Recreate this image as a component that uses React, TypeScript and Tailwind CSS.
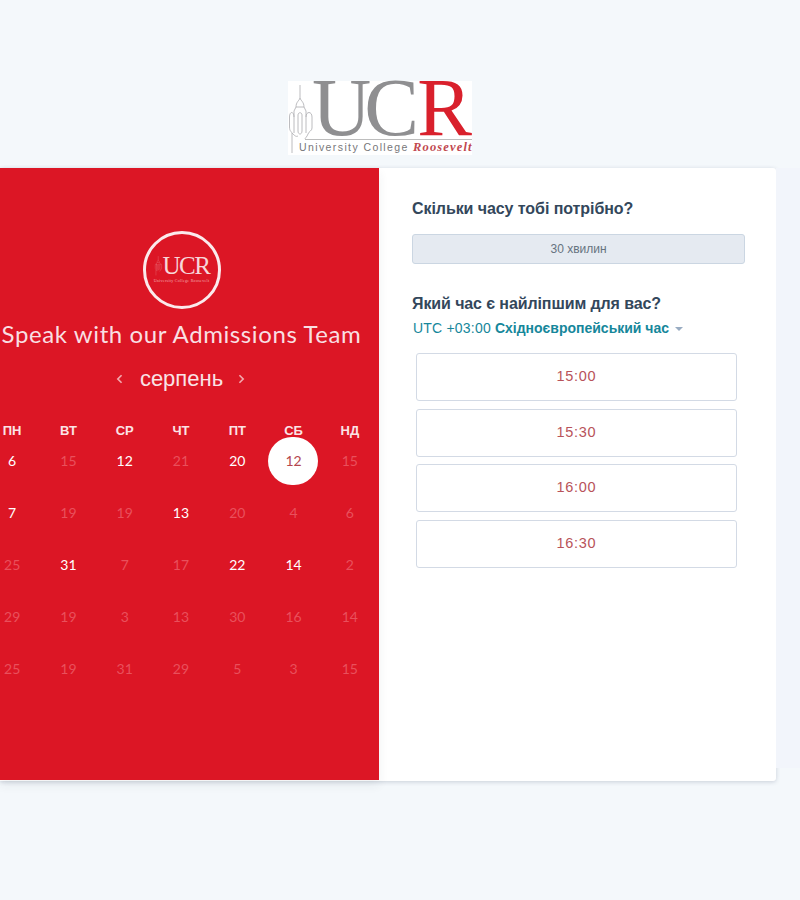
const days = ['ПН', 'ВТ', 'СР', 'ЧТ', 'ПТ', 'СБ', 'НД'];

// n = number, on = bright (available), sel = selected circle
const weeks = [
  [{ n: 6, on: true }, { n: 15 }, { n: 12, on: true }, { n: 21 }, { n: 20, on: true }, { n: 12, sel: true }, { n: 15 }],
  [{ n: 7, on: true }, { n: 19 }, { n: 19 }, { n: 13, on: true }, { n: 20 }, { n: 4 }, { n: 6 }],
  [{ n: 25 }, { n: 31, on: true }, { n: 7 }, { n: 17 }, { n: 22, on: true }, { n: 14, on: true }, { n: 2 }],
  [{ n: 29 }, { n: 19 }, { n: 3 }, { n: 13 }, { n: 30 }, { n: 16 }, { n: 14 }],
  [{ n: 25 }, { n: 19 }, { n: 31 }, { n: 29 }, { n: 5 }, { n: 3 }, { n: 15 }],
];

const times = ['15:00', '15:30', '16:00', '16:30'];

function Tower({ className, color }: { className: string; color: string }) {
  return (
    <svg viewBox="0 0 26 74" className={className} fill="none" stroke={color} strokeWidth="0.9">
      <path d="M12 4V17M8 26C8 21 11 20 12 17C13 20 16 21 16 26M6 30L8 26H16L18 30" />
      <path d="M6 30V52M18 30V52M10 50V34C10 31 14 31 14 34V50C14 54 10 54 10 50Z" />
      <path d="M6 36C6 30 1.5 30 1.5 36V46C1.5 50 3 50 4 52M18 36C18 30 24 30 24 36V47C24 50 21 50 20 53" />
      <path d="M4 52V72M4 52C7 55 8 56 10 55M20 53C19 56 17 57 17 58" />
    </svg>
  );
}

function Logo() {
  return (
    <div className="relative w-[184px] h-[74px] bg-white font-['Liberation_Serif',serif]">
      <Tower className="absolute left-0 top-0 w-[26px] h-[74px]" color="#b4b4b8" />
      <div className="absolute left-[24px] top-[-14px] text-[82px] leading-[82px] tracking-[-7px] text-[#8f8f91]">UC</div>
      <div className="absolute right-0 top-[-14px] text-[82px] leading-[82px] text-[#d9202c]">R</div>
      <div className="absolute left-[17px] right-0 top-[58px] border-t border-[#bdbdbd]" />
      <div className="absolute left-[11px] top-[59px] text-[10.5px] leading-[15px] tracking-[1.4px] text-[#77777a] whitespace-nowrap font-['Liberation_Sans',sans-serif]">
        University College
      </div>
      <div className="absolute left-[125px] top-[59px] text-[12.5px] leading-[15px] tracking-[1.15px] italic font-bold text-[#c1484f] whitespace-nowrap">
        Roosevelt
      </div>
    </div>
  );
}

function SmallLogo() {
  return (
    <div className="w-[78px] h-[78px] rounded-full border-[3px] border-[#fbeaec] flex flex-col items-center justify-center font-['Liberation_Serif',serif] text-[#f7d6d9]">
      <div className="flex items-end h-[23px] mb-[1px]">
        <Tower className="w-[9px] h-[21px] mb-[1px]" color="#f0a0a6" />
        <span className="text-[25px] leading-[23px] tracking-[-1.5px]">UCR</span>
      </div>
      <div className="text-[4px] leading-[5px] tracking-[0.3px] text-[#f3aeb3] whitespace-nowrap mb-[3px]">University College Roosevelt</div>
    </div>
  );
}

export default function App() {
  return (
    <div className="w-[800px] h-[900px] bg-[#f4f8fb] overflow-hidden font-['Liberation_Sans',sans-serif]">
      <div className="flex justify-center pt-[81px] mr-[40px]">
        <Logo />
      </div>

      <div className="flex mt-[13px] items-start">
        <div className="flex w-[776px] h-[613px] rounded-r-[3px] shadow-[0_1px_4px_rgba(50,70,100,0.22)] bg-white">
          <div className="w-[379px] h-[612px] bg-[#dc1625] shadow-[0_5px_10px_rgba(40,50,70,0.07)] overflow-hidden">
            {/* column is wider than the panel, cut off on the left */}
            <div className="ml-[-16px] w-[395px] flex flex-col items-center pt-[63px]">
              <SmallLogo />
              <h1 className="mt-[7px] h-[36px] text-[24px] leading-[36px] text-[#f9dfe2] font-['Lato',sans-serif] font-normal whitespace-nowrap tracking-[0.6px]">
                Speak with our Admissions Team
              </h1>
              <div className="flex items-center mt-[9px] mr-[2px] h-[36px] text-[#f9e3e5]">
                <svg viewBox="0 0 8 12" className="w-[7px] h-[10px] mr-[17px]" fill="none" stroke="#f3a9ae" strokeWidth="2">
                  <path d="M6.5 1.5 2 6l4.5 4.5" />
                </svg>
                <span className="text-[22px] leading-[36px]">серпень</span>
                <svg viewBox="0 0 8 12" className="w-[7px] h-[10px] ml-[15px]" fill="none" stroke="#f3a9ae" strokeWidth="2">
                  <path d="M1.5 1.5 6 6l-4.5 4.5" />
                </svg>
              </div>

              <div className="w-[394px] mt-[24px] mr-[1px]">
                <div className="grid grid-cols-7 h-[20px]">
                  {days.map((d) => (
                    <div key={d} className="text-center text-[13px] leading-[20px] font-bold text-[#fbe3e5]">{d}</div>
                  ))}
                </div>
                {weeks.map((week, i) => (
                  <div key={i} className={`grid grid-cols-7 h-[52px] ${i === 0 ? 'mt-[-4px]' : ''}`}>
                    {week.map((c, j) => (
                      <div key={j} className="relative flex items-center justify-center">
                        {c.sel && <div className="absolute left-[3px] top-[0px] w-[50px] h-[48px] rounded-full bg-white" />}
                        <span className={`relative -mt-[5px] text-[14px] leading-[52px] font-['Lato',sans-serif] ${c.sel ? 'text-[#b5474f]' : c.on ? 'text-white' : 'text-[#e9505c]'}`}>
                          {c.n}
                        </span>
                      </div>
                    ))}
                  </div>
                ))}
              </div>
            </div>
          </div>

          <div className="flex-1 pl-[33px] pr-[31px] pt-[31px]">
            <h2 className="text-[16px] leading-[20px] font-bold tracking-[-0.07px] text-[#33475b]">Скільки часу тобі потрібно?</h2>
            <div className="mt-[15px] h-[30px] rounded-[3px] border border-[#cbd6e2] bg-[#e5eaf1] flex items-center justify-center text-[12px] text-[#66737f]">
              30 хвилин
            </div>
            <h2 className="mt-[30px] text-[16px] leading-[20px] font-bold tracking-[-0.1px] text-[#33475b]">Який час є найліпшим для вас?</h2>
            <div className="mt-[4px] flex items-center text-[14px] leading-[20px] text-[#16879b]">
              <span className="ml-[1px] tracking-[0.2px]">UTC +03:00</span>
              <span className="ml-[4px] font-bold">Східноєвропейський час</span>
              <span className="ml-[6px] mt-[1px] w-0 h-0 border-x-[4px] border-x-transparent border-t-[4px] border-t-[#99acc2]" />
            </div>
            <div className="mt-[15px] ml-[4px] mr-[8px] flex flex-col gap-[7.67px]">
              {times.map((t) => (
                <button key={t} className="h-[48px] rounded-[3px] border border-[#d3dae5] bg-white text-[14.5px] tracking-[0.7px] text-[#b8535a]">
                  {t}
                </button>
              ))}
            </div>
          </div>
        </div>
        {/* faint strip on the right of the card */}
        <div className="flex-1 h-[600px] bg-[#f2f5fb]" />
      </div>
    </div>
  );
}
